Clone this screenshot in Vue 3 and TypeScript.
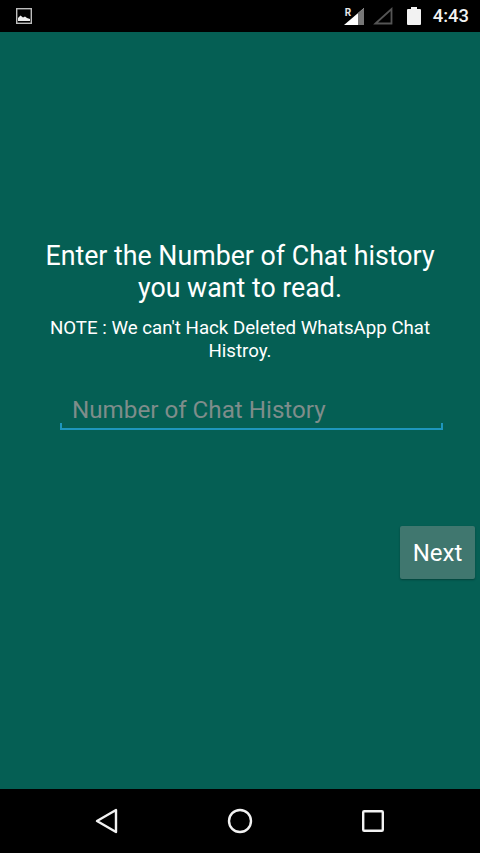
<script setup lang="ts">
const heading: string = 'Enter the Number of Chat history you want to read.'
const note: string = "NOTE : We can't Hack Deleted WhatsApp Chat Histroy."
</script>

<template>
  <div class="phone">
    <header class="status">
      <svg class="pic" width="16" height="16" viewBox="0 0 16 16">
        <rect x="0.7" y="0.7" width="14.6" height="14.6" fill="#000" stroke="#bdbdbd" stroke-width="1.4" />
        <path d="M2 13 V10 L4.5 7.5 L7 9.5 L9 8.5 L11 10 L14 11 V13 Z" fill="#eee" />
      </svg>
      <div class="right">
        <div class="sig">
          <svg width="22" height="22" viewBox="0 0 22 22">
            <path d="M2 20 L22 3 V20 Z" fill="#fff" />
            <path d="M16 8.1 L22 3 V20 H16 Z" fill="#777" />
          </svg>
          <span class="r">R</span>
        </div>
        <svg class="sig2" width="20" height="20" viewBox="0 0 20 20">
          <path d="M2.5 17.5 L18.5 3 V17.5 Z" fill="none" stroke="#555" stroke-width="1.8" />
        </svg>
        <svg class="batt" width="14" height="18" viewBox="0 0 14 18">
          <path d="M4 0 H10 V2 H13 a1 1 0 0 1 1 1 V17 a1 1 0 0 1 -1 1 H1 a1 1 0 0 1 -1 -1 V3 a1 1 0 0 1 1 -1 H4 Z" fill="#f2f2f2" />
        </svg>
        <span class="time">4:43</span>
      </div>
    </header>

    <main class="main">
      <h1 class="heading">{{ heading }}</h1>
      <p class="note">{{ note }}</p>
      <div class="field">
        <input class="input" type="text" placeholder="Number of Chat History" />
      </div>
      <div class="actions">
        <button class="next" type="button">Next</button>
      </div>
    </main>

    <nav class="nav">
      <svg width="24" height="26" viewBox="0 0 24 26">
        <path d="M21 2 V24 L2 13 Z" fill="none" stroke="#f2f2f2" stroke-width="2.4" stroke-linejoin="round" />
      </svg>
      <svg width="26" height="26" viewBox="0 0 26 26">
        <circle cx="13" cy="13" r="11" fill="none" stroke="#f2f2f2" stroke-width="2.4" />
      </svg>
      <svg width="24" height="24" viewBox="0 0 24 24">
        <rect x="2.2" y="2.2" width="19.6" height="19.6" rx="1" fill="none" stroke="#f2f2f2" stroke-width="2.4" />
      </svg>
    </nav>
  </div>
</template>

<style scoped>
.phone {
  width: 480px;
  height: 853px;
  display: flex;
  flex-direction: column;
  background: #055f54;
  font-family: Roboto, "Liberation Sans", sans-serif;
  overflow: hidden;
}
.status {
  height: 32px;
  flex: none;
  background: #000;
  display: flex;
  align-items: center;
  justify-content: space-between;
  padding: 0 11px 0 16px;
  box-sizing: border-box;
}
.pic { display: block; }
.right {
  display: flex;
  align-items: center;
}
.sig {
  position: relative;
  width: 22px;
  height: 22px;
  margin-right: 9px;
}
.sig svg { display: block; }
.r {
  position: absolute;
  left: 3px;
  top: 3px;
  color: #e8e8e8;
  font-size: 10px;
  font-weight: 700;
  line-height: 10px;
}
.sig2 { margin-right: 14px; display: block; }
.batt { margin-right: 12px; display: block; }
.time {
  color: #f2f2f2;
  font-size: 18.4px;
  font-weight: 500;
  line-height: 22px;
}
.main {
  flex: 1;
  display: flex;
  flex-direction: column;
  padding-top: 208px;
  box-sizing: border-box;
  min-height: 0;
}
.heading {
  margin: 0 40px;
  color: #fff;
  font-size: 26.75px;
  font-weight: 400;
  line-height: 32px;
  text-align: center;
}
.note {
  margin: 13px 40px 0;
  color: #fff;
  font-size: 18.7px;
  font-weight: 400;
  line-height: 23px;
  text-align: center;
}
.field {
  margin: 29px 37px 0 60px;
  height: 38px;
  position: relative;
  box-sizing: border-box;
  border-left: 2px solid #1e96bd;
  border-right: 2px solid #1e96bd;
  border-bottom: 2px solid #1e96bd;
  border-image: linear-gradient(to bottom, transparent 85%, #1e96bd 85%) 1;
}
.input {
  display: block;
  width: 100%;
  height: 36px;
  margin: 0;
  padding: 0 10px;
  box-sizing: border-box;
  background: transparent;
  border: 0;
  outline: 0;
  color: #fff;
  font-family: inherit;
  font-size: 24.2px;
  line-height: 36px;
}
.input::placeholder {
  color: #7f8d8b;
  opacity: 1;
}
.actions {
  display: flex;
  justify-content: flex-end;
  margin-top: 96px;
  padding-right: 5px;
}
.next {
  width: 75px;
  height: 53px;
  padding: 0;
  border: 0;
  border-radius: 2px;
  background: #40776f;
  color: #fff;
  font-family: inherit;
  font-size: 24px;
  box-shadow: 0 1px 2px rgba(0, 0, 0, 0.3);
}
.nav {
  height: 64px;
  flex: none;
  background: #000;
  display: flex;
  align-items: center;
  justify-content: space-between;
  padding: 0 95px;
  box-sizing: border-box;
}
.nav svg { display: block; }
</style>
